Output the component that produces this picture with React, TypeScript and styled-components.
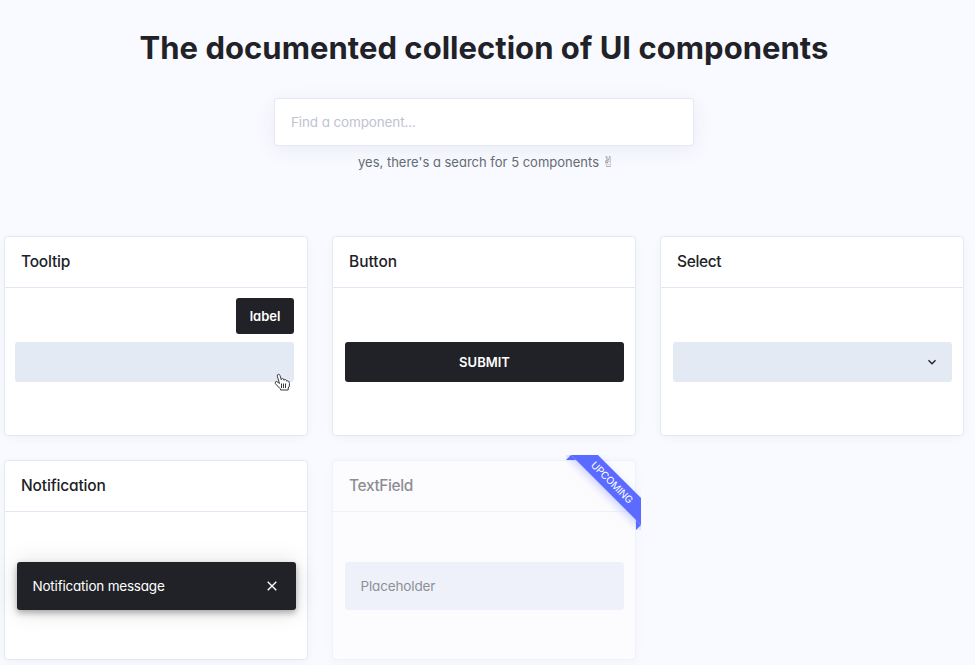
import React from 'react';
import styled, { createGlobalStyle, css } from 'styled-components';

const GlobalStyle = createGlobalStyle`
  *, *::before, *::after { box-sizing: border-box; }
  html { background: #f9faff; overflow: hidden; }
  body {
    margin: 0;
    font-family: Inter, "Liberation Sans", sans-serif;
    font-feature-settings: "cv11";
    color: #212227;
  }
`;

const Page = styled.main`
  width: 968px;
  height: 665px;
  padding: 28px 4px 0;
  display: flex;
  flex-direction: column;
  align-items: center;
`;

const Title = styled.h1`
  margin: 0;
  height: 40px;
  font-size: 31px;
  line-height: 40px;
  font-weight: 700;
  letter-spacing: 0.03px;
  white-space: nowrap;
`;

const SearchInput = styled.input`
  width: 420px;
  height: 48px;
  margin: 30px 0 0;
  padding: 0 16px 1px;
  border: 1px solid #e4e8f5;
  border-radius: 3px;
  background: #fff;
  box-shadow: 0 4px 20px rgba(40, 50, 120, 0.07);
  font: inherit;
  font-feature-settings: inherit;
  font-size: 13.5px;
  letter-spacing: -0.13px;
  outline: none;
  &::placeholder { color: #bfc2d3; opacity: 1; }
`;

const Hint = styled.p`
  margin: 6px 0 0;
  height: 20px;
  display: flex;
  gap: 3px;
  font-size: 13px;
  line-height: 20px;
  color: #646b73;
  white-space: nowrap;
`;

const Victory = styled.span`
  width: 8px;
  font-family: "DejaVu Sans", sans-serif;
  font-size: 15px;
  color: #85898e;
`;

const Grid = styled.section`
  margin-top: 64px;
  display: grid;
  grid-template-columns: repeat(3, 304px);
  grid-auto-rows: 200px;
  gap: 24px;
`;

const Cell = styled.div`
  position: relative;
`;

const Card = styled.article<{ $muted?: boolean }>`
  height: 200px;
  display: flex;
  flex-direction: column;
  border: 1px solid #e3e9f4;
  border-radius: 4px;
  background: #fff;
  box-shadow: 0 2px 8px rgba(40, 60, 120, 0.045);
  opacity: ${(p) => (p.$muted ? 0.5 : 1)};
`;

const CardHeader = styled.h2<{ $spacing: number }>`
  margin: 0;
  height: 51px;
  padding: 0 16px;
  border-bottom: 1px solid #e3e9f4;
  font-size: 15.5px;
  line-height: 49px;
  font-weight: 500;
  letter-spacing: ${(p) => p.$spacing}px;
`;

const CardBody = styled.div<{ $shift?: number }>`
  position: relative;
  flex: 1;
  display: flex;
  align-items: center;
  padding: 1px 0 0 ${(p) => 12 + (p.$shift || 0)}px;
`;

const control = css`
  width: 279px;
  height: 40px;
  border-radius: 3px;
`;

const Placeholder = styled.div`
  ${control}
  background: #e4eaf4;
`;

const SelectBox = styled(Placeholder)`
  display: flex;
  align-items: center;
  justify-content: flex-end;
  padding-right: 15px;
`;

const SubmitButton = styled.button`
  ${control}
  border: 0;
  padding: 0;
  background: #212227;
  color: #fff;
  font: inherit;
  font-size: 13px;
  font-weight: 600;
  letter-spacing: 0;
`;

const TooltipBubble = styled.div`
  position: absolute;
  top: 10px;
  right: 13px;
  width: 58px;
  height: 36px;
  border-radius: 3px;
  background: #212227;
  color: #fff;
  font-size: 13px;
  font-weight: 600;
  line-height: 36px;
  text-align: center;
`;

const Pointer = styled.svg`
  position: absolute;
  left: 269px;
  top: 85px;
`;

const Notice = styled.div`
  ${control}
  height: 48px;
  display: flex;
  align-items: center;
  justify-content: space-between;
  padding: 0 19px 0 15.5px;
  background: #212227;
  color: #fff;
  font-size: 13.5px;
  letter-spacing: -0.2px;
  box-shadow: 0 3px 6px rgba(0, 0, 0, 0.3), 0 1px 24px rgba(0, 0, 0, 0.13);
`;

const TextField = styled(Placeholder)`
  height: 48px;
  padding: 0 15.5px;
  line-height: 48px;
  font-size: 13.5px;
  letter-spacing: -0.15px;
`;

const RibbonClip = styled.div`
  position: absolute;
  top: -5px;
  right: -5px;
  width: 75px;
  height: 75px;
  overflow: hidden;
  &::before, &::after {
    content: "";
    position: absolute;
    background: #5b6bff;
  }
  &::before {
    left: 0;
    top: 0;
    width: 10px;
    height: 5px;
    clip-path: polygon(50% 0, 100% 100%, 0 100%);
  }
  &::after {
    right: 0;
    bottom: 0;
    width: 5px;
    height: 10px;
    clip-path: polygon(0 0, 100% 50%, 0 100%);
  }
`;

const RibbonBand = styled.span`
  position: absolute;
  left: -13.5px;
  top: 18.5px;
  width: 120px;
  height: 19px;
  padding-right: 3px;
  transform: rotate(45deg);
  background: #5b6bff;
  color: #fff;
  box-shadow: 0 3px 9px rgba(91, 107, 255, 0.3);
  font-size: 10px;
  letter-spacing: -0.15px;
  line-height: 19px;
  text-align: center;
`;

function HandPointer() {
  return (
    <Pointer width="17" height="19" viewBox="0 0 17 19">
      <path
        d="M5.5 10.5 3.3 3.2Q3 1.5 4.3 1.3T6 2.6L7.3 6.7Q7.4 5.4 8.6 5.5T10 7.3Q10.3 6.2 11.5 6.6T12.8 8.3Q13.2 7.4 14.3 8T15.4 10.3V13L14.2 15V17H6.6V15.9L3 12.6Q.6 10.3 1.3 9T4 9.3Z"
        fill="#fff"
        stroke="#3a3b40"
        strokeWidth="1"
      />
      <path d="M7.5 10.5V15M9.5 10.5V15M11.5 10.5V15" stroke="#3a3b40" strokeWidth="1" />
    </Pointer>
  );
}

export default function App() {
  return (
    <>
      <GlobalStyle />
      <Page>
        <Title>The documented collection of UI components</Title>
        <SearchInput placeholder="Find a component..." />
        <Hint>
          <span>yes, there's a search for 5 components</span>
          <Victory>✌︎</Victory>
        </Hint>
        <Grid>
          <Cell>
            <Card>
              <CardHeader $spacing={-0.2}>Tooltip</CardHeader>
              <CardBody $shift={-2}>
                <Placeholder />
                <TooltipBubble>label</TooltipBubble>
                <HandPointer />
              </CardBody>
            </Card>
          </Cell>
          <Cell>
            <Card>
              <CardHeader $spacing={0}>Button</CardHeader>
              <CardBody>
                <SubmitButton>SUBMIT</SubmitButton>
              </CardBody>
            </Card>
          </Cell>
          <Cell>
            <Card>
              <CardHeader $spacing={-0.35}>Select</CardHeader>
              <CardBody>
                <SelectBox>
                  <svg width="10" height="8" viewBox="0 0 10 8" fill="none">
                    <path d="M1.5 2.2 5 5.7 8.5 2.2" stroke="#212227" strokeWidth="1.4" />
                  </svg>
                </SelectBox>
              </CardBody>
            </Card>
          </Cell>
          <Cell>
            <Card>
              <CardHeader $spacing={-0.15}>Notification</CardHeader>
              <CardBody>
                <Notice>
                  <span>Notification message</span>
                  <svg width="10" height="10" viewBox="0 0 10 10">
                    <path d="M.7.7 9.3 9.3M9.3.7.7 9.3" stroke="#fff" strokeWidth="1.4" />
                  </svg>
                </Notice>
              </CardBody>
            </Card>
          </Cell>
          <Cell>
            <Card $muted>
              <CardHeader $spacing={-0.4}>TextField</CardHeader>
              <CardBody>
                <TextField>Placeholder</TextField>
              </CardBody>
            </Card>
            <RibbonClip>
              <RibbonBand>UPCOMING</RibbonBand>
            </RibbonClip>
          </Cell>
        </Grid>
      </Page>
    </>
  );
}
